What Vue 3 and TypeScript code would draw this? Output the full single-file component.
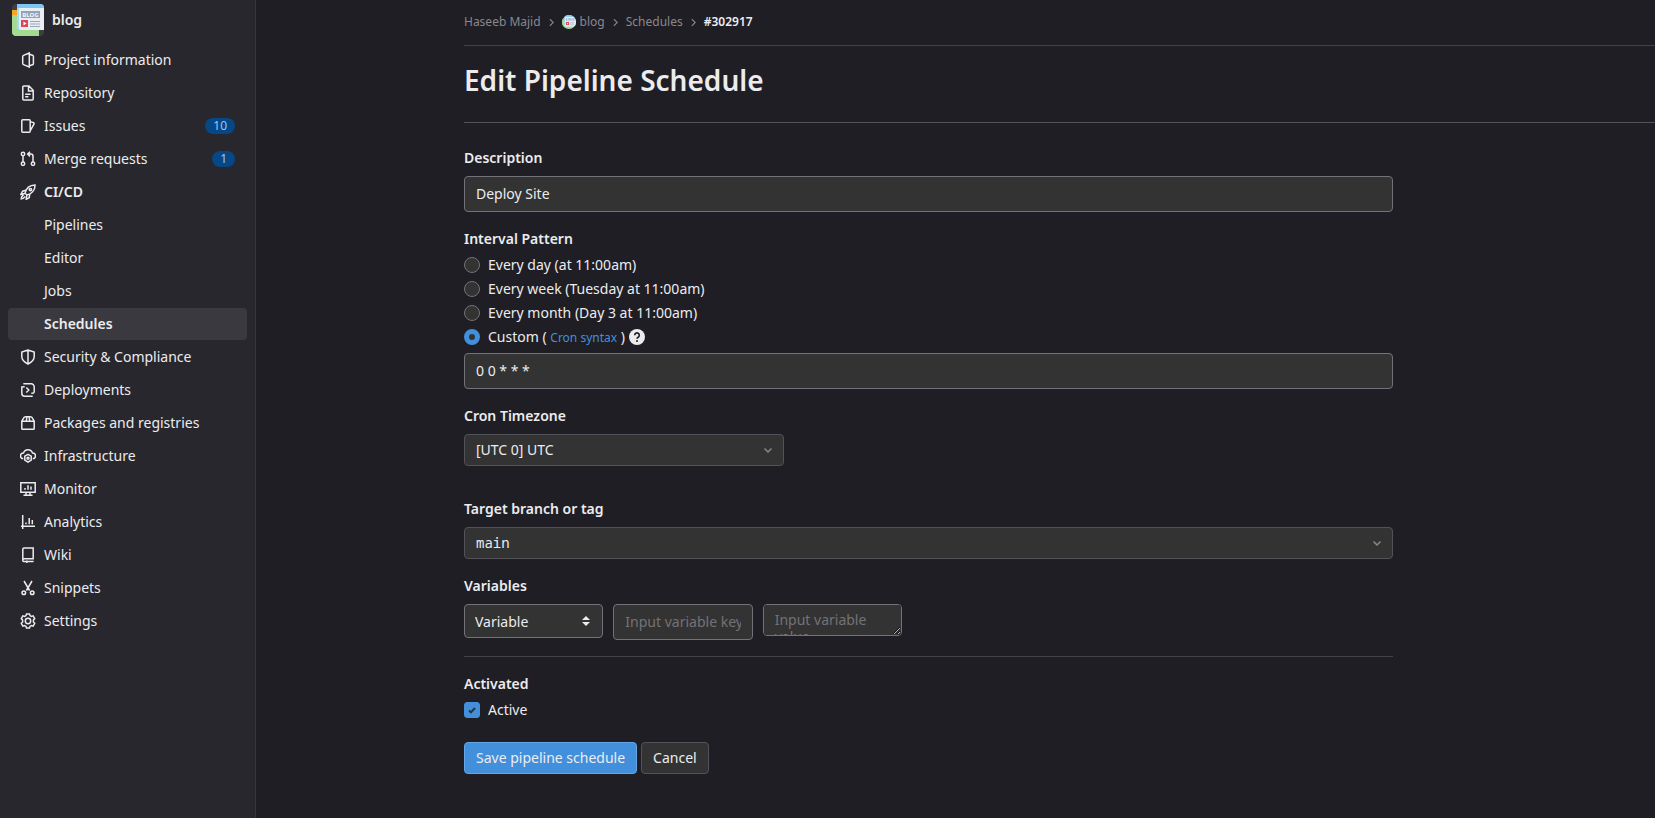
<script setup lang="ts">
import { ref } from 'vue'

interface NavItem {
  label: string
  icon?: string
  count?: number
  bold?: boolean
  active?: boolean
}

const navItems: NavItem[] = [
  { label: 'Project information', icon: 'project' },
  { label: 'Repository', icon: 'doc' },
  { label: 'Issues', icon: 'issues', count: 10 },
  { label: 'Merge requests', icon: 'merge', count: 1 },
  { label: 'CI/CD', icon: 'rocket', bold: true },
  { label: 'Pipelines' },
  { label: 'Editor' },
  { label: 'Jobs' },
  { label: 'Schedules', bold: true, active: true },
  { label: 'Security & Compliance', icon: 'shield' },
  { label: 'Deployments', icon: 'deployments' },
  { label: 'Packages and registries', icon: 'package' },
  { label: 'Infrastructure', icon: 'cloud' },
  { label: 'Monitor', icon: 'monitor' },
  { label: 'Analytics', icon: 'chart' },
  { label: 'Wiki', icon: 'book' },
  { label: 'Snippets', icon: 'snippet' },
  { label: 'Settings', icon: 'settings' },
]

const icons: Record<string, string> = {
  project:
    'M9.300 1 3.500 3.400a1.200 1.200 0 0 0-.8 1.100v7a1.200 1.200 0 0 0 .8 1.100L9.300 15zM9.300 2.300l3.200.9a1.200 1.200 0 0 1 .9 1.200v7.200a1.200 1.200 0 0 1-.9 1.200l-3.200.9',
  doc:
    'M2.800 2a1 1 0 0 1 1-1H9l4.200 4.300v8.700a1 1 0 0 1-1 1H3.800a1 1 0 0 1-1-1zM8.500 1.300V6h4.500M5.200 9.200h5.400M5.200 11.800h3.200',
  issues:
    'M1.800 2.700a1 1 0 0 1 1-1h6.400a1 1 0 0 1 1 1v10.600a1 1 0 0 1-1 1H2.800a1 1 0 0 1-1-1zM10.400 3.600l2.900 1a1 1 0 0 1 .7 1.300l-.2.6-3.400 5.800',
  merge:
    'M3 5.200v5.400M13 10.600V5.300A2.200 2.200 0 0 0 10.800 3.100H8M10 .8 7.700 3.100 10 5.400M4.700 3a1.700 1.700 0 1 1-3.400 0 1.700 1.700 0 0 1 3.400 0zM4.700 12.800a1.700 1.700 0 1 1-3.400 0 1.700 1.700 0 0 1 3.400 0zM14.700 12.800a1.700 1.700 0 1 1-3.400 0 1.700 1.700 0 0 1 3.400 0z',
  rocket:
    'M5 9.200C6 4.800 9.300 1.200 15 1c.2 5.300-3.500 9-8 10zM5.800 6.300 2.600 7.200.9 10.300l3.900-.8M9.800 10.200l-.6 3.500-3 1.600.6-4M3.600 10.600l-2 2.300-.3 1.900 1.900-.4 2-1.900M11.600 5.600a1.200 1.200 0 1 1-2.400 0 1.200 1.200 0 0 1 2.400 0z',
  shield: 'M8 1 1.800 3v4.600c0 3.400 2.600 5.700 6.200 7.500 3.600-1.800 6.200-4.100 6.200-7.500V3zM8 1v14',
  deployments:
    'M3.300 1.800h7.900a3 3 0 0 1 3 3v4.900a1.500 1.500 0 0 1-1.500 1.500h-1.400M1.800 4.300v6.900a3 3 0 0 0 3 3h7.900M1.800 6.300a1.500 1.500 0 0 1 1.500-1.500h1.400M6.300 5.500 8.800 8l-2.500 2.500',
  package:
    'M1.800 6.300h12.400v7.100a.8.8 0 0 1-.8.8H2.600a.8.8 0 0 1-.8-.8zM1.800 6.300l1.600-3a2.700 2.700 0 0 1 2.400-1.500h4.400a2.700 2.700 0 0 1 2.400 1.500l1.600 3M6.900 2 6.300 6M9.100 2l.6 4',
  cloud:
    'M3.300 10.800A2.900 2.900 0 0 1 3.500 5 4.700 4.700 0 0 1 12.500 5a2.900 2.900 0 0 1 .2 5.800M8 6.400l3.200 1.800v3.900L8 14.200l-3.200-2.100V8.200zM9 10.300a1 1 0 1 1-2 0 1 1 0 0 1 2 0z',
  monitor: 'M.8 1.800h14.400v9.400H.8zM3.500 14.300h9M6 11.500v2.500M10 11.500v2.500M5 7v1.800M8 4.200v4.600M11 5.500v3.300',
  chart: 'M2.700 1v14M1 12.300h14M6 8.500v1.800M9.200 4v6.300M12.300 6v4.300',
  book: 'M2.800 13V2.300a1.300 1.300 0 0 1 1.300-1.300h9.100v10.700H4.200a1.400 1.400 0 0 0 0 2.900h9.400M6.800 13.500V16',
  snippet:
    'M4 1l5.600 9.500M12 1 6.400 10.500M5.600 12.700a1.800 1.800 0 1 1-3.600 0 1.800 1.800 0 0 1 3.600 0zM14 12.700a1.800 1.800 0 1 1-3.600 0 1.800 1.800 0 0 1 3.600 0z',
  settings:
    'M6.500.9h3l.5 1.700 1.300.8 1.800-.5 1.600 2.700-1.300 1.400v2l1.300 1.400-1.600 2.700-1.800-.5-1.300.8-.5 1.700h-3l-.5-1.700-1.300-.8-1.800.5-1.600-2.700L2.600 9V7L1.300 5.600l1.600-2.700 1.800.5L6 2.600zM10.700 8a2.700 2.700 0 1 1-5.400 0 2.700 2.700 0 0 1 5.400 0z',
}

const intervals = [
  { value: 'day', label: 'Every day (at 11:00am)' },
  { value: 'week', label: 'Every week (Tuesday at 11:00am)' },
  { value: 'month', label: 'Every month (Day 3 at 11:00am)' },
]

const description = ref('Deploy Site')
const interval = ref('custom')
const cron = ref('0 0 * * *')
const timezone = ref('[UTC 0] UTC')
const branch = ref('main')
const variableType = ref('Variable')
const variableKey = ref('')
const variableValue = ref('')
const active = ref(true)
</script>

<template>
  <div class="page">
    <svg class="defs" aria-hidden="true">
      <symbol id="blog-logo" viewBox="0 0 32 32">
        <rect width="32" height="32" fill="#3f3e43" />
        <path d="M0 8h7v24H4a4 4 0 0 1-4-4z" fill="#9bd98b" />
        <path d="M0 11h7v14h20v7H4a4 4 0 0 1-4-4z" fill="#a3dc90" />
        <path d="M0 6h5v5H0z" fill="#f5a623" />
        <path d="M5 0h27v26H8a3 3 0 0 1-3-3z" fill="#a9d6f5" />
        <path d="M7 4h25v22H9a2 2 0 0 1-2-2z" fill="#e9eef5" />
        <path d="M5 0h27v4H5z" fill="#7cc8f5" />
        <rect x="9" y="7" width="19" height="7" fill="#94a3b3" />
        <text x="18.500" y="12.800" text-anchor="middle" font-size="6" font-weight="700" font-family="Noto Sans, sans-serif" fill="#f4f6f8">BLOG</text>
        <rect x="9" y="16" width="7" height="7" fill="#d9485a" />
        <path d="M11.500 17.500v4l3-2z" fill="#fff" />
        <path d="M18 17.500h10M18 20h10M18 22.500h10" stroke="#9aa7b5" />
      </symbol>
    </svg>

    <aside class="sidebar">
      <a class="project" href="#">
        <svg class="avatar"><use href="#blog-logo" /></svg>
        <span>blog</span>
      </a>
      <nav class="menu" aria-label="Project navigation">
        <a
          v-for="item in navItems"
          :key="item.label"
          href="#"
          class="menu-item"
          :class="{ bold: item.bold, active: item.active }"
        >
          <span class="icon-slot">
            <svg v-if="item.icon" class="icon" viewBox="0 0 16 16" aria-hidden="true">
              <path :d="icons[item.icon]" />
            </svg>
          </span>
          <span class="menu-label">{{ item.label }}</span>
          <span v-if="item.count" class="badge">{{ item.count }}</span>
        </a>
      </nav>
    </aside>

    <main class="content">
      <nav class="breadcrumbs" aria-label="Breadcrumbs">
        <a href="#">Haseeb Majid</a>
        <svg class="sep" viewBox="0 0 8 8"><path d="M2.500 1 5.500 4 2.500 7" /></svg>
        <a href="#" class="crumb-project">
          <svg class="crumb-avatar"><use href="#blog-logo" /></svg>
          <span>blog</span>
        </a>
        <svg class="sep" viewBox="0 0 8 8"><path d="M2.500 1 5.500 4 2.500 7" /></svg>
        <a href="#">Schedules</a>
        <svg class="sep" viewBox="0 0 8 8"><path d="M2.500 1 5.500 4 2.500 7" /></svg>
        <a href="#" class="current">#302917</a>
      </nav>

      <h1>Edit Pipeline Schedule</h1>

      <form class="form" @submit.prevent>
        <div class="group">
          <label class="title" for="description">Description</label>
          <input id="description" v-model="description" class="field" type="text" />
        </div>

        <div class="group" role="radiogroup" aria-labelledby="interval-title">
          <span id="interval-title" class="title tight">Interval Pattern</span>
          <div v-for="option in intervals" :key="option.value" class="choice">
            <input :id="option.value" v-model="interval" type="radio" name="interval" class="radio" :value="option.value" />
            <label :for="option.value">{{ option.label }}</label>
          </div>
          <div class="choice last">
            <input id="custom" v-model="interval" type="radio" name="interval" class="radio" value="custom" />
            <label for="custom">Custom ( <a class="syntax" href="#">Cron syntax</a> )</label>
            <button class="help" type="button" aria-label="Help">
              <svg viewBox="0 0 16 16" aria-hidden="true">
                <circle cx="8" cy="8" r="8" fill="#ececef" />
                <path d="M5.700 6.200a2.300 2.300 0 1 1 3.500 2C8.400 8.700 8 9 8 9.800" fill="none" stroke="#1f1e24" stroke-width="1.600" />
                <circle cx="8" cy="12" r="1" fill="#1f1e24" />
              </svg>
            </button>
          </div>
          <input v-model="cron" class="field" type="text" aria-label="Cron pattern" />
        </div>

        <div class="group">
          <label class="title" for="timezone">Cron Timezone</label>
          <span class="dropdown narrow">
            <select id="timezone" v-model="timezone"><option>[UTC 0] UTC</option></select>
            <svg class="caret" viewBox="0 0 16 16"><path d="M4.500 6.500 8 10l3.500-3.500" /></svg>
          </span>
        </div>

        <div class="group spaced">
          <label class="title" for="branch">Target branch or tag</label>
          <span class="dropdown mono">
            <select id="branch" v-model="branch"><option>main</option></select>
            <svg class="caret" viewBox="0 0 16 16"><path d="M4.500 6.500 8 10l3.500-3.500" /></svg>
          </span>
        </div>

        <div class="group variables" role="group" aria-labelledby="variables-title">
          <span id="variables-title" class="title">Variables</span>
          <div class="variable-row">
            <span class="dropdown type">
              <select v-model="variableType" aria-label="Variable type"><option>Variable</option></select>
              <svg class="updown" viewBox="0 0 8 10"><path d="M4 0l4 4H0zM4 10 0 6h8z" /></svg>
            </span>
            <input v-model="variableKey" class="field key" type="text" placeholder="Input variable key" aria-label="Variable key" />
            <textarea v-model="variableValue" class="field value" rows="1" placeholder="Input variable value" aria-label="Variable value"></textarea>
          </div>
        </div>

        <div class="group" role="group" aria-labelledby="activated-title">
          <span id="activated-title" class="title tight">Activated</span>
          <div class="choice">
            <span class="check">
              <input id="active" v-model="active" type="checkbox" />
              <svg v-if="active" viewBox="0 0 16 16" aria-hidden="true"><path d="M5 8.500 7 10.300 11 6" /></svg>
            </span>
            <label for="active">Active</label>
          </div>
        </div>

        <div class="actions">
          <button class="btn primary" type="submit">Save pipeline schedule</button>
          <button class="btn" type="button">Cancel</button>
        </div>
      </form>
    </main>
  </div>
</template>

<style>
body {
  background: #1f1e24;
}
</style>

<style scoped>
.page,
.page * {
  box-sizing: border-box;
}

.page {
  display: flex;
  min-height: 100vh;
  background: #1f1e24;
  color: #ececef;
  color-scheme: dark;
  font: 14px/20px 'Noto Sans', sans-serif;
}

.defs {
  position: absolute;
  width: 0;
  height: 0;
}

a {
  color: inherit;
  text-decoration: none;
}

input,
select,
textarea,
button {
  margin: 0;
  color: inherit;
  font: inherit;
}

.sidebar {
  flex: none;
  width: 256px;
  padding: 4px 8px;
  background: #28272d;
  border-right: 1px solid #37363c;
}

.project {
  display: flex;
  align-items: center;
  gap: 8px;
  padding: 0 4px 8px;
  font-weight: 600;
}

.avatar {
  width: 32px;
  height: 32px;
  border-radius: 4px;
}

.menu {
  display: flex;
  flex-direction: column;
  gap: 1px;
}

.menu-item {
  display: flex;
  align-items: center;
  gap: 8px;
  height: 32px;
  padding: 0 12px;
  border-radius: 4px;
}

.bold {
  font-weight: 600;
}

.active {
  background: #3a393f;
}

.icon-slot {
  display: flex;
  flex: none;
  width: 16px;
}

.icon {
  width: 16px;
  height: 16px;
  fill: none;
  stroke: currentColor;
  stroke-width: 1.500;
}

.menu-label {
  flex: 1;
}

.badge {
  padding: 0 8px;
  border-radius: 8px;
  background: #064787;
  color: #9dc7f1;
  font-size: 12px;
  line-height: 16px;
}

.content {
  flex: 1;
  min-width: 0;
  padding-left: 208px;
}

.breadcrumbs {
  display: flex;
  align-items: center;
  gap: 6px;
  padding: 12px 0 13px;
  border-bottom: 1px solid #434248;
  color: #89888d;
  font-size: 12px;
}

.sep {
  width: 9px;
  height: 9px;
  fill: none;
  stroke: #89888d;
  stroke-width: 1;
}

.crumb-project {
  display: flex;
  align-items: center;
  gap: 4px;
}

.crumb-avatar {
  width: 14px;
  height: 14px;
  border-radius: 50%;
}

.current {
  color: #ececef;
  font-weight: 600;
}

h1 {
  margin: 0;
  padding: 16px 0 24px;
  border-bottom: 1px solid #55545a;
  font-size: 28px;
  font-weight: 600;
  line-height: 36px;
}

.form {
  display: flex;
  flex-direction: column;
  gap: 16px;
  width: 78%;
  padding: 24px 0;
}

.group {
  display: flex;
  flex-direction: column;
}

.title {
  margin-bottom: 8px;
  font-weight: 600;
  line-height: 21px;
}

.title.tight {
  margin-bottom: 4px;
}

.field,
select {
  border: 1px solid #737278;
  border-radius: 4px;
  background: #333333;
  outline: none;
}

.field {
  width: 100%;
  height: 36px;
  padding: 6px 11px 8px;
}

.field::placeholder {
  color: #737278;
  opacity: 1;
}

.choice {
  display: flex;
  align-items: center;
  gap: 8px;
  height: 24px;
}

.choice.last {
  gap: 4px;
  margin-bottom: 4px;
}

.choice.last .radio {
  margin-right: 4px;
}

.radio {
  appearance: none;
  width: 16px;
  height: 16px;
  border: 1px solid #737278;
  border-radius: 50%;
  background: #333333;
}

.radio:checked {
  border: 5px solid #428fdc;
}

.syntax {
  color: #428fdc;
  font-size: 12px;
}

.help {
  display: flex;
  padding: 0;
  border: 0;
  background: none;
}

.help svg {
  width: 16px;
  height: 16px;
}

.dropdown {
  display: grid;
  align-items: center;
}

.dropdown > * {
  grid-area: 1 / 1;
}

.dropdown select {
  appearance: none;
  width: 100%;
  height: 32px;
  padding: 0 11px;
  border-color: #535258;
}

.dropdown svg {
  justify-self: end;
  pointer-events: none;
}

.narrow {
  width: 320px;
}

.mono select {
  font-family: 'Noto Sans Mono', 'DejaVu Sans Mono', monospace;
}

.caret {
  width: 16px;
  height: 16px;
  margin-right: 8px;
  fill: none;
  stroke: #89888d;
  stroke-width: 1.500;
}

.spaced {
  margin-top: 16px;
}

.variables {
  padding-bottom: 16px;
  border-bottom: 1px solid #434248;
}

.variable-row {
  display: flex;
  align-items: flex-start;
  gap: 10px;
}

.variable-row > * {
  flex: none;
  width: 15%;
}

.dropdown.type select {
  height: 34px;
  padding: 2px 10px 0;
  border-color: #737278;
}

.updown {
  width: 8px;
  height: 10px;
  margin-right: 13px;
  fill: #ececef;
}

.field.value {
  height: 32px;
  padding: 6px 11px;
  line-height: 17px;
  resize: both;
}

.check {
  display: grid;
}

.check > * {
  grid-area: 1 / 1;
  width: 16px;
  height: 16px;
}

.check input {
  appearance: none;
  border: 1px solid #737278;
  border-radius: 3px;
  background: #333333;
}

.check input:checked {
  border-color: #428fdc;
  background: #428fdc;
}

.check svg {
  pointer-events: none;
  fill: none;
  stroke: #333333;
  stroke-width: 2;
}

.actions {
  display: flex;
  gap: 4px;
  margin-top: 4px;
}

.btn {
  height: 32px;
  padding: 0 11px;
  border: 1px solid #535258;
  border-radius: 4px;
  background: #333333;
}

.btn.primary {
  border-color: #63a6e9;
  background: #428fdc;
}
</style>
